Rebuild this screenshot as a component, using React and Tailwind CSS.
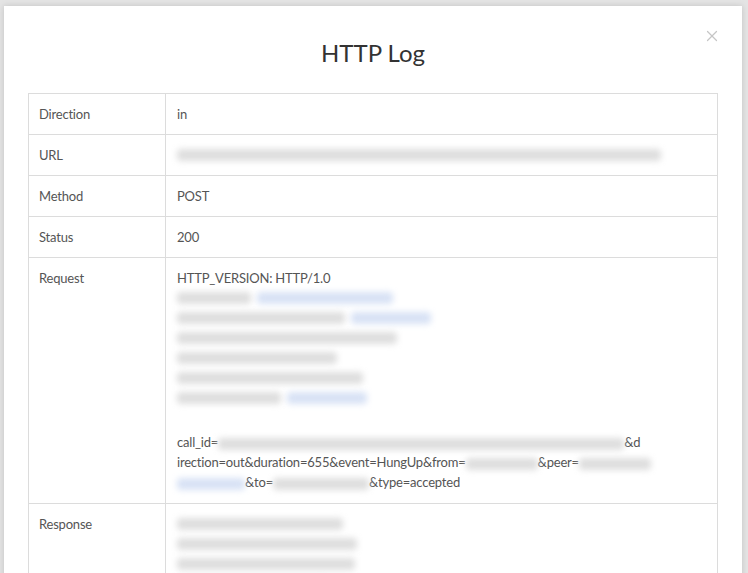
import { X } from 'lucide-react'

function Blur({ w, blue }) {
  return (
    <span
      className={`inline-block align-middle h-[12px] rounded-sm blur-[3px] ${blue ? 'bg-[#d8e2f5]' : 'bg-[#dedede]'}`}
      style={{ width: w }}
    ></span>
  )
}

function Row({ label, children, last }) {
  return (
    <div className={`grid grid-cols-[137px_1fr] ${last ? '' : 'border-b border-[#dcdcdc]'}`}>
      <div className="px-[10px] py-[10px] border-r border-[#dcdcdc]">{label}</div>
      <div className="px-[11px] py-[10px]">{children}</div>
    </div>
  )
}

function BlurLine({ parts }) {
  return (
    <div className="flex items-center h-[20px] gap-[6px]">
      {parts.map((p, i) => (
        <Blur key={i} w={p[0]} blue={p[1]} />
      ))}
    </div>
  )
}

export default function App() {
  return (
    <div className="h-[573px] w-full overflow-hidden bg-[#e4e4e4] pt-[6px] pl-[4px] pr-[6px] font-['Lato',sans-serif]">
      <div className="relative bg-white shadow-[0_0_6px_rgba(0,0,0,0.15)] h-[600px] pt-[32px]">
        <button className="absolute top-[21px] right-[21px] text-[#c6c6c6]">
          <X className="w-[18px] h-[18px]" strokeWidth={1.6} />
        </button>
        <h1 className="text-center text-[24px] leading-[30px] text-[#333] mb-[25px]">HTTP Log</h1>

        <div className="mx-[24px] border border-[#dcdcdc] text-[13px] tracking-[-0.2px] leading-[20px] text-[#555]">
          <Row label="Direction">in</Row>
          <Row label="URL">
            <BlurLine parts={[[484, false]]} />
          </Row>
          <Row label="Method">POST</Row>
          <Row label="Status">200</Row>
          <Row label="Request">
            <div>HTTP_VERSION: HTTP/1.0</div>
            <BlurLine parts={[[74, false], [136, true]]} />
            <BlurLine parts={[[168, false], [80, true]]} />
            <BlurLine parts={[[220, false]]} />
            <BlurLine parts={[[160, false]]} />
            <BlurLine parts={[[186, false]]} />
            <BlurLine parts={[[104, false], [80, true]]} />
            <div className="h-[24px]"></div>
            <div className="whitespace-nowrap">
              call_id=<Blur w={406} />&amp;d
            </div>
            <div className="whitespace-nowrap">
              irection=out&amp;duration=655&amp;event=HungUp&amp;from=<Blur w={72} />&amp;peer=<Blur w={72} />
            </div>
            <div className="whitespace-nowrap">
              <Blur w={68} blue />&amp;to=<Blur w={96} />&amp;type=accepted
            </div>
            <div className="h-[1px]"></div>
          </Row>
          <Row label="Response" last>
            <BlurLine parts={[[166, false]]} />
            <BlurLine parts={[[180, false]]} />
            <BlurLine parts={[[178, false]]} />
            <BlurLine parts={[[150, false]]} />
          </Row>
        </div>
      </div>
    </div>
  )
}
